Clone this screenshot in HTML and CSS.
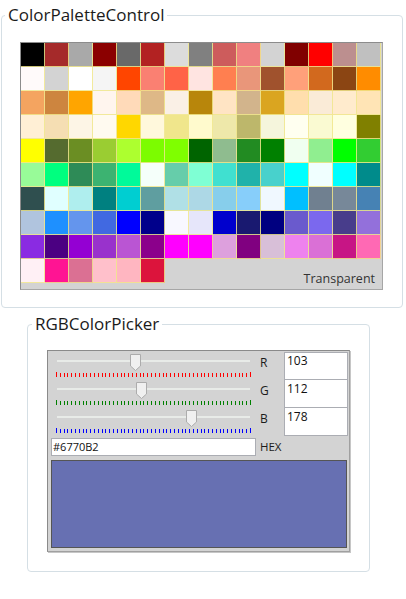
FILE: index.html
```html
<!DOCTYPE html>
<html>
<head>
<meta charset="utf-8">
<link rel="stylesheet" href="styles.css">
</head>
<body>
<fieldset class="group palette-group">
  <legend class="group-title">ColorPaletteControl</legend>
  <div class="palette">
    <div class="swatch" style="background:#000000"></div><div class="swatch" style="background:#a52a2a"></div><div class="swatch" style="background:#a9a9a9"></div><div class="swatch" style="background:#8b0000"></div><div class="swatch" style="background:#696969"></div><div class="swatch" style="background:#b22222"></div><div class="swatch" style="background:#dcdcdc"></div><div class="swatch" style="background:#808080"></div><div class="swatch" style="background:#cd5c5c"></div><div class="swatch" style="background:#f08080"></div><div class="swatch" style="background:#d3d3d3"></div><div class="swatch" style="background:#800000"></div><div class="swatch" style="background:#ff0000"></div><div class="swatch" style="background:#bc8f8f"></div><div class="swatch" style="background:#c0c0c0"></div>
    <div class="swatch" style="background:#fffafa"></div><div class="swatch" style="background:#d3d3d3"></div><div class="swatch" style="background:#ffffff"></div><div class="swatch" style="background:#f5f5f5"></div><div class="swatch" style="background:#ff4500"></div><div class="swatch" style="background:#fa8072"></div><div class="swatch" style="background:#ff6347"></div><div class="swatch" style="background:#ffe4e1"></div><div class="swatch" style="background:#ff7f50"></div><div class="swatch" style="background:#e9967a"></div><div class="swatch" style="background:#a0522d"></div><div class="swatch" style="background:#ffa07a"></div><div class="swatch" style="background:#d2691e"></div><div class="swatch" style="background:#8b4513"></div><div class="swatch" style="background:#ff8c00"></div>
    <div class="swatch" style="background:#f4a460"></div><div class="swatch" style="background:#cd853f"></div><div class="swatch" style="background:#ffa500"></div><div class="swatch" style="background:#fff5ee"></div><div class="swatch" style="background:#ffdab9"></div><div class="swatch" style="background:#deb887"></div><div class="swatch" style="background:#faf0e6"></div><div class="swatch" style="background:#b8860b"></div><div class="swatch" style="background:#ffe4c4"></div><div class="swatch" style="background:#d2b48c"></div><div class="swatch" style="background:#daa520"></div><div class="swatch" style="background:#ffdead"></div><div class="swatch" style="background:#faebd7"></div><div class="swatch" style="background:#ffebcd"></div><div class="swatch" style="background:#ffe4b5"></div>
    <div class="swatch" style="background:#ffefd5"></div><div class="swatch" style="background:#f5deb3"></div><div class="swatch" style="background:#fdf5e6"></div><div class="swatch" style="background:#fffaf0"></div><div class="swatch" style="background:#ffd700"></div><div class="swatch" style="background:#fff8dc"></div><div class="swatch" style="background:#f0e68c"></div><div class="swatch" style="background:#fffacd"></div><div class="swatch" style="background:#eee8aa"></div><div class="swatch" style="background:#bdb76b"></div><div class="swatch" style="background:#f5f5dc"></div><div class="swatch" style="background:#fffff0"></div><div class="swatch" style="background:#fafad2"></div><div class="swatch" style="background:#ffffe0"></div><div class="swatch" style="background:#808000"></div>
    <div class="swatch" style="background:#ffff00"></div><div class="swatch" style="background:#556b2f"></div><div class="swatch" style="background:#6b8e23"></div><div class="swatch" style="background:#9acd32"></div><div class="swatch" style="background:#adff2f"></div><div class="swatch" style="background:#7cfc00"></div><div class="swatch" style="background:#7fff00"></div><div class="swatch" style="background:#006400"></div><div class="swatch" style="background:#8fbc8f"></div><div class="swatch" style="background:#228b22"></div><div class="swatch" style="background:#008000"></div><div class="swatch" style="background:#f0fff0"></div><div class="swatch" style="background:#90ee90"></div><div class="swatch" style="background:#00ff00"></div><div class="swatch" style="background:#32cd32"></div>
    <div class="swatch" style="background:#98fb98"></div><div class="swatch" style="background:#00ff7f"></div><div class="swatch" style="background:#2e8b57"></div><div class="swatch" style="background:#3cb371"></div><div class="swatch" style="background:#00fa9a"></div><div class="swatch" style="background:#f5fffa"></div><div class="swatch" style="background:#66cdaa"></div><div class="swatch" style="background:#7fffd4"></div><div class="swatch" style="background:#40e0d0"></div><div class="swatch" style="background:#20b2aa"></div><div class="swatch" style="background:#48d1cc"></div><div class="swatch" style="background:#00ffff"></div><div class="swatch" style="background:#f0ffff"></div><div class="swatch" style="background:#00ffff"></div><div class="swatch" style="background:#008b8b"></div>
    <div class="swatch" style="background:#2f4f4f"></div><div class="swatch" style="background:#e0ffff"></div><div class="swatch" style="background:#afeeee"></div><div class="swatch" style="background:#008080"></div><div class="swatch" style="background:#00ced1"></div><div class="swatch" style="background:#5f9ea0"></div><div class="swatch" style="background:#b0e0e6"></div><div class="swatch" style="background:#add8e6"></div><div class="swatch" style="background:#87ceeb"></div><div class="swatch" style="background:#87cefa"></div><div class="swatch" style="background:#f0f8ff"></div><div class="swatch" style="background:#00bfff"></div><div class="swatch" style="background:#708090"></div><div class="swatch" style="background:#778899"></div><div class="swatch" style="background:#4682b4"></div>
    <div class="swatch" style="background:#b0c4de"></div><div class="swatch" style="background:#1e90ff"></div><div class="swatch" style="background:#6495ed"></div><div class="swatch" style="background:#4169e1"></div><div class="swatch" style="background:#0000ff"></div><div class="swatch" style="background:#00008b"></div><div class="swatch" style="background:#f8f8ff"></div><div class="swatch" style="background:#e6e6fa"></div><div class="swatch" style="background:#0000cd"></div><div class="swatch" style="background:#191970"></div><div class="swatch" style="background:#000080"></div><div class="swatch" style="background:#6a5acd"></div><div class="swatch" style="background:#7b68ee"></div><div class="swatch" style="background:#483d8b"></div><div class="swatch" style="background:#9370db"></div>
    <div class="swatch" style="background:#8a2be2"></div><div class="swatch" style="background:#4b0082"></div><div class="swatch" style="background:#9400d3"></div><div class="swatch" style="background:#9932cc"></div><div class="swatch" style="background:#ba55d3"></div><div class="swatch" style="background:#8b008b"></div><div class="swatch" style="background:#ff00ff"></div><div class="swatch" style="background:#ff00ff"></div><div class="swatch" style="background:#dda0dd"></div><div class="swatch" style="background:#800080"></div><div class="swatch" style="background:#d8bfd8"></div><div class="swatch" style="background:#ee82ee"></div><div class="swatch" style="background:#da70d6"></div><div class="swatch" style="background:#c71585"></div><div class="swatch" style="background:#ff69b4"></div>
    <div class="swatch" style="background:#fff0f5"></div><div class="swatch" style="background:#ff1493"></div><div class="swatch" style="background:#db7093"></div><div class="swatch" style="background:#ffc0cb"></div><div class="swatch" style="background:#ffb6c1"></div><div class="swatch" style="background:#dc143c"></div>
    <div class="transparent">Transparent</div>
  </div>
</fieldset>

<fieldset class="group picker-group">
  <legend class="group-title">RGBColorPicker</legend>
  <div class="picker">
    <div class="slider row1">
      <div class="track"></div>
      <div class="ticks red"></div>
      <svg class="thumb" style="left:78.5px" width="11" height="17" viewBox="0 0 11 17"><path d="M0.5 0.5H10.5V12L5.5 16.5L0.5 12Z" fill="#f0f0f0" stroke="#acacac"/></svg>
    </div>
    <div class="axis row1">R</div>
    <div class="num row1 first">103</div>

    <div class="slider row2">
      <div class="track"></div>
      <div class="ticks green"></div>
      <svg class="thumb" style="left:85.3px" width="11" height="17" viewBox="0 0 11 17"><path d="M0.5 0.5H10.5V12L5.5 16.5L0.5 12Z" fill="#f0f0f0" stroke="#acacac"/></svg>
    </div>
    <div class="axis row2">G</div>
    <div class="num row2">112</div>

    <div class="slider row3">
      <div class="track"></div>
      <div class="ticks blue"></div>
      <svg class="thumb" style="left:135.2px" width="11" height="17" viewBox="0 0 11 17"><path d="M0.5 0.5H10.5V12L5.5 16.5L0.5 12Z" fill="#f0f0f0" stroke="#acacac"/></svg>
    </div>
    <div class="axis row3">B</div>
    <div class="num row3">178</div>

    <div class="hex-input">#6770B2</div>
    <div class="hex-label">HEX</div>

    <div class="preview"></div>
  </div>
</fieldset>
</body>
</html>
```

FILE: styles.css
```css
body {
  margin: 0;
  background: #ffffff;
  font-family: "Open Sans", "Noto Sans", sans-serif;
  color: #1b1b1b;
}

.group {
  border: 1px solid #d5dfe5;
  border-radius: 4px;
  min-width: 0;
  min-inline-size: 0;
}

.group-title {
  font-size: 17px;
  line-height: 22px;
  padding: 0 3px;
  margin-left: -15px;
}

.palette-group {
  margin: 4px 3px 0 1px;
  padding: 16px 18px 17px 18px;
}

.palette {
  display: grid;
  grid-template-columns: repeat(15, 24px);
  grid-auto-rows: 24px;
  width: max-content;
  background: #d3d3d3;
  border: 1px solid #a6a6a6;
  border-top-color: #8c8c8c;
  border-left-color: #8c8c8c;
  padding: 0 1px 6px 0;
}

.swatch {
  border-right: 1px solid rgba(240, 230, 140, 0.85);
  border-bottom: 1px solid rgba(240, 230, 140, 0.85);
}

.transparent {
  grid-column: span 9;
  margin-bottom: -6px;
  display: flex;
  align-items: flex-end;
  justify-content: flex-end;
  padding: 0 6px 2px 0;
  font-size: 12.5px;
  line-height: 17px;
  color: #333333;
}

.picker-group {
  margin: 5px 0 0 27px;
  width: 343px;
  box-sizing: border-box;
  padding: 15px 0 19px 19px;
}

.picker {
  display: grid;
  grid-template-columns: 205px 28px 64px;
  grid-template-rows: 28px 28px 28px auto auto;
  width: max-content;
  background: #d3d3d3;
  border: 1px solid #a0a0a0;
  border-top-color: #8a8a8a;
  border-left-color: #8a8a8a;
  box-shadow: 1px 1px 0 #c6c6c6;
  padding: 1px 1px 3px 3px;
}

.row1 { grid-row: 1; }
.row2 { grid-row: 2; }
.row3 { grid-row: 3; }

.slider {
  grid-column: 1;
  position: relative;
  padding: 8px 6px 0 6px;
}

.track {
  height: 2px;
  background: #e8ebe8;
}

.ticks {
  position: relative;
  margin: 11px -1px 0 -1px;
  height: 4px;
  background: repeating-linear-gradient(to right, currentColor 0 1px, transparent 1px 3.804px);
}

.ticks::before,
.ticks::after {
  content: "";
  position: absolute;
  top: -1px;
  width: 1px;
  height: 5px;
  background: currentColor;
}

.ticks::before { left: 0; }
.ticks::after { right: 0; }

.ticks.red { color: #ff0000; }
.ticks.green { color: #008000; }
.ticks.blue { color: #0000ff; }

.thumb {
  position: absolute;
  top: 2px;
  display: block;
}

.axis {
  grid-column: 2;
  padding: 2px 0 0 4px;
  font-size: 12px;
  line-height: 18px;
  color: #1b1b1b;
}

.num {
  grid-column: 3;
  background: #ffffff;
  border: 1px solid #abadb3;
  border-top: none;
  font-size: 12px;
  line-height: 16px;
  padding: 0 2px;
  color: #111111;
}

.num.first {
  border-top: 1px solid #abadb3;
}

.num.row2,
.num.row3 {
  padding-top: 1px;
}

.hex-input {
  grid-row: 4;
  grid-column: 1;
  margin-top: 2px;
  height: 18px;
  box-sizing: border-box;
  background: #ffffff;
  border: 1px solid #abadb3;
  font-size: 11px;
  line-height: 16px;
  padding-left: 1px;
  color: #111111;
}

.hex-label {
  grid-row: 4;
  grid-column: 2;
  margin-top: 2px;
  padding-left: 4px;
  font-size: 11.5px;
  line-height: 18px;
}

.preview {
  grid-row: 5;
  grid-column: 1 / -1;
  margin: 4px 1px 0 0;
  height: 88px;
  box-sizing: border-box;
  background: #6770b2;
  border: 1px solid #555555;
}
```
